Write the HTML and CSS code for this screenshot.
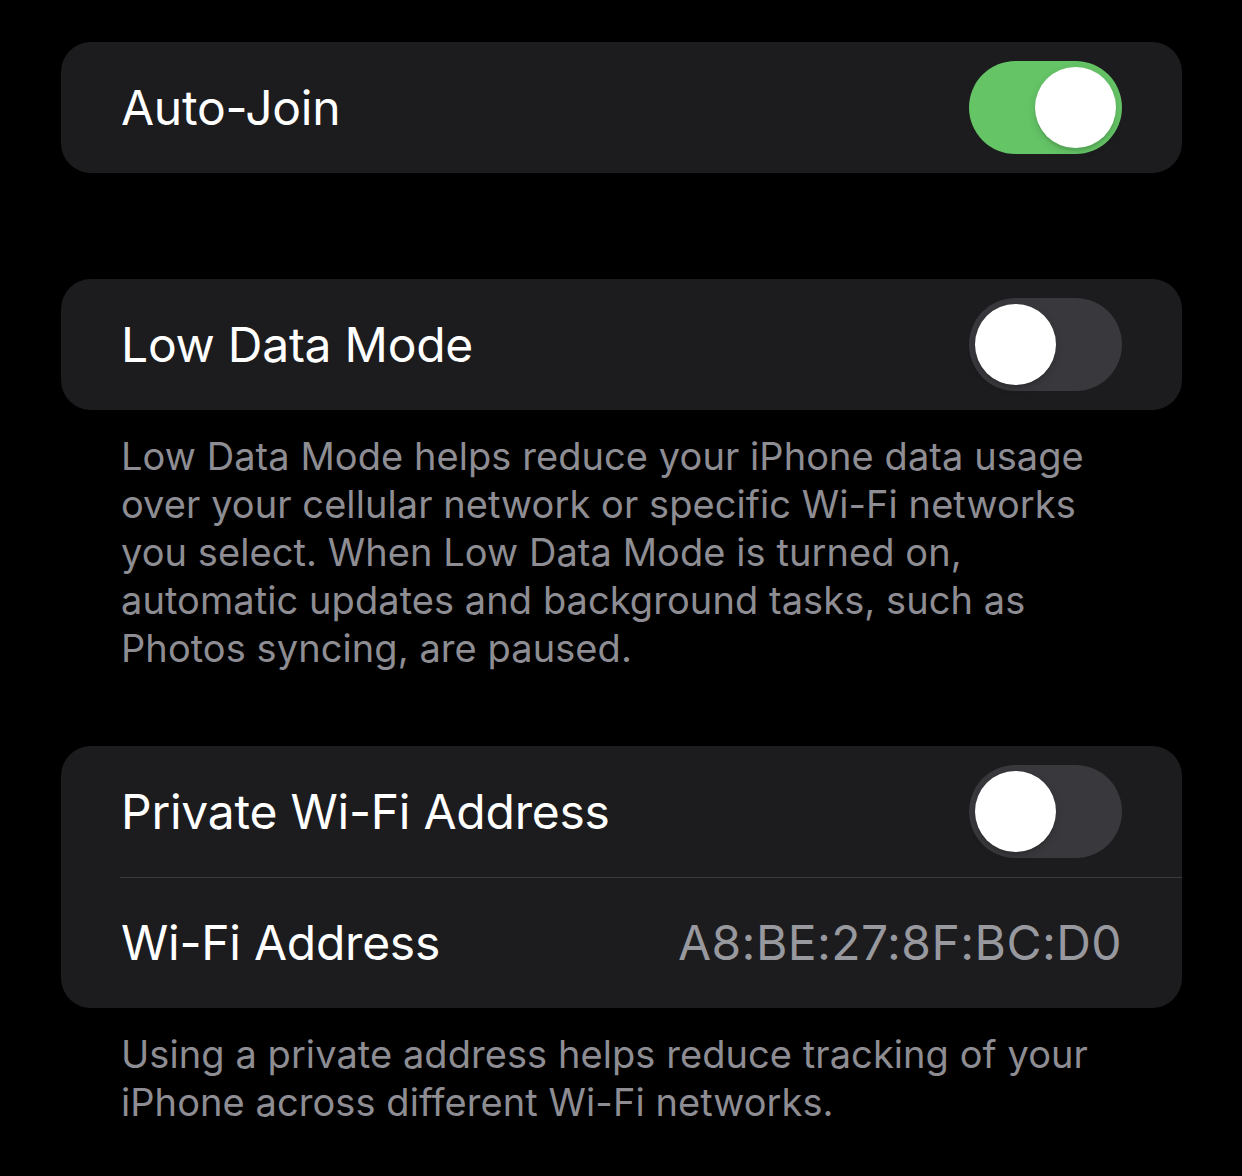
FILE: index.html
```html
<!DOCTYPE html>
<html lang="en">
<head>
<meta charset="utf-8">
<title>Wi-Fi Settings</title>
<link rel="stylesheet" href="styles.css">
</head>
<body>
<main class="page">
  <section class="group group-first">
    <div class="row">
      <span class="label">Auto-Join</span>
      <span class="toggle toggle-on"><span class="knob"></span></span>
    </div>
  </section>

  <section class="group group-spaced">
    <div class="row">
      <span class="label">Low Data Mode</span>
      <span class="toggle"><span class="knob"></span></span>
    </div>
  </section>
  <p class="footnote">Low Data Mode helps reduce your iPhone data usage over your cellular network or specific Wi-Fi networks you select. When Low Data Mode is turned on, automatic updates and background tasks, such as Photos syncing, are paused.</p>

  <section class="group">
    <div class="row">
      <span class="label">Private Wi-Fi Address</span>
      <span class="toggle"><span class="knob"></span></span>
    </div>
    <div class="row row-divided">
      <span class="label">Wi-Fi Address</span>
      <span class="value">A8:BE:27:8F:BC:D0</span>
    </div>
  </section>
  <p class="footnote">Using a private address helps reduce tracking of your iPhone across different Wi-Fi networks.</p>
</main>
</body>
</html>
```

FILE: styles.css
```css
html, body {
  margin: 0;
  padding: 0;
  background: #000;
}

body {
  font-family: Inter, "Noto Sans", "Liberation Sans", sans-serif;
  color: #fff;
  width: 1242px;
  height: 1176px;
  overflow: hidden;
}

.page {
  padding: 42px 60px 0 61px;
}

.group {
  background: #1c1c1e;
  border-radius: 30px;
  overflow: hidden;
}

.group-spaced {
  margin-top: 106px;
}

.row {
  height: 131px;
  display: flex;
  align-items: center;
  justify-content: space-between;
  padding: 0 60px 0 60px;
  position: relative;
}

.row-divided::before {
  content: "";
  position: absolute;
  top: 0;
  left: 59px;
  right: 0;
  height: 1px;
  background: #3a3a3c;
}

.label {
  font-size: 48px;
  letter-spacing: -0.25px;
  color: #fff;
}

.value {
  font-size: 48px;
  letter-spacing: 0.45px;
  color: #98989f;
}

.toggle {
  width: 153px;
  height: 93px;
  border-radius: 47px;
  background: #39393d;
  display: flex;
  align-items: center;
  padding: 0 6px;
  box-sizing: border-box;
}

.toggle-on {
  background: #65c466;
  justify-content: flex-end;
}

.knob {
  width: 81px;
  height: 81px;
  border-radius: 50%;
  background: #fff;
  box-shadow: 0 3px 8px rgba(0, 0, 0, 0.15), 0 3px 1px rgba(0, 0, 0, 0.06);
}

.footnote {
  margin: 0;
  padding: 22px 60px 74px 60px;
  font-size: 38px;
  line-height: 48px;
  letter-spacing: 0.07px;
  color: #8d8d93;
}
```
